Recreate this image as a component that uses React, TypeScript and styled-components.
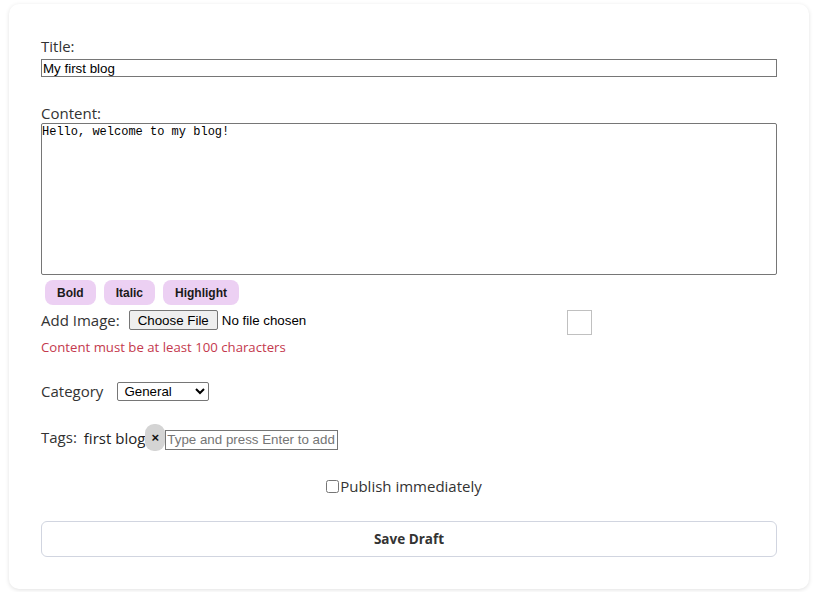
import React from "react";
import styled, { createGlobalStyle } from "styled-components";

const Global = createGlobalStyle`
  html, body { margin: 0; padding: 0; background: #ffffff; }
  body { font-family: "Open Sans", "Noto Sans", sans-serif; color: #333; }
`;

const Page = styled.div`
  padding: 4px 5px 3px 9px;
`;

const Card = styled.form`
  width: 800px;
  box-sizing: border-box;
  padding: 32px;
  background: #fff;
  border-radius: 10px;
  box-shadow: 0 1px 4px rgba(0, 0, 0, 0.12);
  height: 585px;
`;

const Field = styled.div<{ $mb?: number }>`
  display: flex;
  flex-direction: column;
  margin-bottom: ${(p) => p.$mb ?? 0}px;
`;

const Label = styled.label<{ $mb?: number }>`
  font-size: 15px;
  line-height: 21px;
  color: #333;
  margin-bottom: ${(p) => p.$mb ?? 2}px;
`;

const TextInput = styled.input`
  font-family: "Liberation Sans", Arial, sans-serif;
  font-size: 13.33px;
  height: 18px;
  box-sizing: border-box;
  border: 1px solid #767676;
  padding: 0 1px;
  margin: 0;
  color: #000;
  outline: none;
`;

const TextArea = styled.textarea`
  font-family: "Liberation Mono", "DejaVu Sans Mono", monospace;
  font-size: 12px;
  line-height: 15px;
  height: 152px;
  box-sizing: border-box;
  border: 1px solid #767676;
  border-radius: 2px;
  padding: 1px 0;
  margin: 0;
  resize: none;
  color: #000;
  outline: none;
`;

const Toolbar = styled.div`
  display: flex;
  gap: 8px;
  padding-left: 4px;
  margin-top: 5px;
`;

const FormatButton = styled.button`
  height: 25px;
  padding: 0 12px;
  border: none;
  border-radius: 8px;
  background: #ecd0f3;
  font-family: "Liberation Sans", Arial, sans-serif;
  font-weight: bold;
  font-size: 12px;
  color: #1a1a1a;
`;

const Row = styled.div<{ $mt?: number; $align?: string }>`
  display: flex;
  align-items: ${(p) => p.$align ?? "center"};
  margin-top: ${(p) => p.$mt ?? 0}px;
`;

const InlineLabel = styled.span<{ $mr: number }>`
  font-size: 15px;
  line-height: 21px;
  color: #333;
  margin-right: ${(p) => p.$mr}px;
`;

const FileGroup = styled.div`
  display: flex;
  align-items: center;
  height: 20px;
`;

const FileButton = styled.span`
  display: inline-flex;
  align-items: center;
  height: 20px;
  box-sizing: border-box;
  padding: 0 8px;
  border: 1px solid #767676;
  border-radius: 2px;
  background: #efefef;
  font-family: "Liberation Sans", Arial, sans-serif;
  font-size: 13.33px;
  color: #000;
`;

const FileText = styled.span`
  font-family: "Liberation Sans", Arial, sans-serif;
  font-size: 13.33px;
  color: #000;
  margin-left: 4px;
`;

const Preview = styled.div`
  width: 25px;
  height: 25px;
  box-sizing: border-box;
  border: 1px solid #c0c0c0;
  margin-left: 261px;
`;

const ErrorText = styled.div`
  font-size: 13.2px;
  line-height: 18px;
  color: #c4394d;
  margin-top: 3px;
`;

const Select = styled.select`
  font-family: "Liberation Sans", Arial, sans-serif;
  font-size: 13.33px;
  height: 19px;
  width: 92px;
  box-sizing: border-box;
  border: 1px solid #767676;
  border-radius: 2px;
  background: #fff;
  color: #000;
  padding: 0 0 0 2px;
`;

const TagText = styled.span`
  font-size: 15px;
  color: #222;
`;

const RemoveButton = styled.button`
  width: 20px;
  height: 27px;
  border: none;
  border-radius: 9px;
  background: #d4d4d4;
  font-family: "Liberation Sans", Arial, sans-serif;
  font-size: 13px;
  font-weight: bold;
  color: #111;
  padding: 0;
`;

const TagInput = styled(TextInput)`
  width: 173px;
  height: 20px;
  margin-left: 0;
  margin-top: 4px;
  &::placeholder { color: #757575; }
`;

const CheckRow = styled.label`
  display: flex;
  justify-content: center;
  align-items: center;
  font-size: 15px;
  color: #333;
  margin-top: 25px;
  padding-right: 10px;
`;

const Check = styled.input`
  width: 13px;
  height: 13px;
  margin: 0 1px 0 0;
`;

const SaveButton = styled.button`
  width: 100%;
  height: 36px;
  margin-top: 25px;
  background: #fff;
  border: 1px solid #d1d5e0;
  border-radius: 6px;
  font-family: "Open Sans", "Noto Sans", sans-serif;
  font-weight: 700;
  font-size: 13.5px;
  color: #333;
`;

export default function App() {
  return (
    <Page>
      <Global />
      <Card onSubmit={(e) => e.preventDefault()}>
        <Field $mb={26}>
          <Label>Title:</Label>
          <TextInput defaultValue="My first blog" />
        </Field>
        <Field>
          <Label $mb={-1}>Content:</Label>
          <TextArea defaultValue="Hello, welcome to my blog!" />
        </Field>
        <Toolbar>
          <FormatButton type="button">Bold</FormatButton>
          <FormatButton type="button">Italic</FormatButton>
          <FormatButton type="button">Highlight</FormatButton>
        </Toolbar>
        <Row $mt={5} $align="flex-start">
          <InlineLabel $mr={9}>Add Image:</InlineLabel>
          <FileGroup>
            <FileButton>Choose File</FileButton>
            <FileText>No file chosen</FileText>
          </FileGroup>
          <Preview />
        </Row>
        <ErrorText>Content must be at least 100 characters</ErrorText>
        <Row $mt={25}>
          <InlineLabel $mr={14}>Category</InlineLabel>
          <Select defaultValue="General">
            <option>General</option>
          </Select>
        </Row>
        <Row $mt={22}>
          <InlineLabel $mr={7}>Tags:</InlineLabel>
          <TagText>first blog</TagText>
          <RemoveButton type="button">×</RemoveButton>
          <TagInput placeholder="Type and press Enter to add" />
        </Row>
        <CheckRow>
          <Check type="checkbox" />
          Publish immediately
        </CheckRow>
        <SaveButton type="submit">Save Draft</SaveButton>
      </Card>
    </Page>
  );
}
